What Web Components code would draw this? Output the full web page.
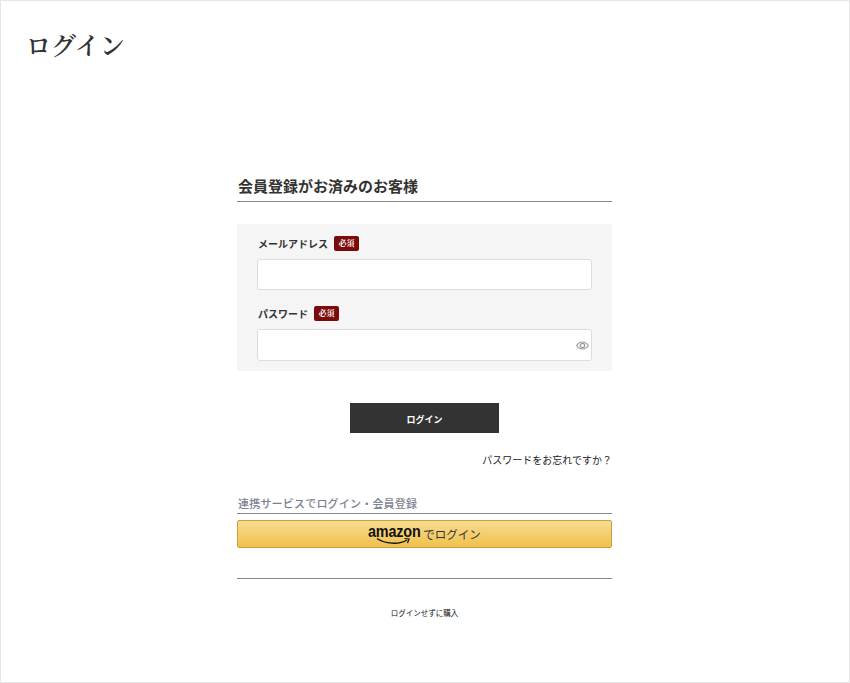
<!DOCTYPE html>
<html lang="ja">
<head>
<meta charset="utf-8">
<title>ログイン</title>
<style>
    html, body { margin: 0; padding: 0; background: #fff; }
    body { font-family: "Noto Sans CJK JP", "Noto Sans", sans-serif; color: #333; }
</style>
</head>
<body>
<login-page>
    <login-section heading="会員登録がお済みのお客様">
        <login-panel>
            <login-field label="メールアドレス"></login-field>
            <login-field label="パスワード" type="password"></login-field>
        </login-panel>
    </login-section>
</login-page>

<script>
class LoginPage extends HTMLElement {
    constructor() {
        super();
        this.attachShadow({ mode: 'open' });
        this.shadowRoot.innerHTML = `
            <style>
                :host { display: block; box-sizing: border-box; width: 850px; height: 683px; border: 1px solid #e6e6e6; overflow: hidden; }
                h1 { margin: 0; padding: 25px 0 0 25px; font: 600 25px/36px "Noto Serif CJK JP", "Noto Sans CJK JP", serif; color: #333; }
                main { width: 375px; margin: 113px 0 0 236px; }
                .submit { display: flex; justify-content: center; margin-top: 32px; }
                .forgot { margin-top: 19px; text-align: right; font-size: 10px; line-height: 16px; color: #222; }
                h2 { margin: 27px 0 0; padding: 0 0 1px 1px; border-bottom: 1px solid #888; font-size: 11px; line-height: 17px; font-weight: 500; color: #7c8290; letter-spacing: .2px; }
                hr { margin: 30px 0 0; border: 0; border-top: 1px solid #888; }
                .guest { margin-top: 28px; text-align: center; font-size: 7.5px; line-height: 12px; color: #111; }
            </style>
            <h1>ログイン</h1>
            <main>
                <slot></slot>
                <div class="submit"><dark-button>ログイン</dark-button></div>
                <div class="forgot">パスワードをお忘れですか？</div>
                <h2>連携サービスでログイン・会員登録</h2>
                <amazon-button></amazon-button>
                <hr>
                <div class="guest">ログインせずに購入</div>
            </main>
        `;
    }
}

class LoginSection extends HTMLElement {
    constructor() {
        super();
        this.attachShadow({ mode: 'open' });
        this.shadowRoot.innerHTML = `
            <style>
                :host { display: block; }
                h2 { margin: 0 0 22px; padding: 0 0 5px 1px; border-bottom: 1px solid #888; font-size: 15px; line-height: 21px; font-weight: 700; color: #333; }
            </style>
            <h2>${this.getAttribute('heading')}</h2>
            <slot></slot>
        `;
    }
}

class LoginPanel extends HTMLElement {
    constructor() {
        super();
        this.attachShadow({ mode: 'open' });
        this.shadowRoot.innerHTML = `
            <style>
                :host { display: flex; flex-direction: column; gap: 15px; padding: 11px 20px 10px; background: #f5f5f5; }
            </style>
            <slot></slot>
        `;
    }
}

class LoginField extends HTMLElement {
    constructor() {
        super();
        this.attachShadow({ mode: 'open' });
        const isPassword = this.getAttribute('type') === 'password';
        this.shadowRoot.innerHTML = `
            <style>
                :host { display: block; }
                .label { display: flex; align-items: center; gap: 6px; height: 16px; margin-bottom: 8px; padding-left: 1px; font-size: 10px; font-weight: 700; color: #333; }
                .badge { display: flex; align-items: center; justify-content: center; width: 25px; height: 15px; border-radius: 2px; background: #7d0a0a; color: #fff; font: 700 8px/1 "Noto Serif CJK JP", "Noto Sans CJK JP", serif; }
                .box { position: relative; }
                input { display: block; box-sizing: border-box; width: 100%; height: ${isPassword ? 32 : 31}px; margin: 0; padding: 0 10px; border: 1px solid #ddd; border-radius: 3px; background: #fff; outline: none; }
                svg { position: absolute; right: 3px; top: 11px; width: 13px; height: 11px; }
            </style>
            <div class="label">${this.getAttribute('label')}<span class="badge">必須</span></div>
            <div class="box">
                <input type="${isPassword ? 'password' : 'text'}">
                ${isPassword ? `<svg viewBox="0 0 13 11" fill="none" stroke="#999" stroke-width="1.200"><path d="M.7 5.500C2.200 3.200 4.200 2 6.500 2s4.300 1.200 5.800 3.500C10.800 7.800 8.800 9 6.500 9S2.200 7.800.7 5.500z"/><circle cx="6.500" cy="5.500" r="2.200"/></svg>` : ''}
            </div>
        `;
    }
}

class DarkButton extends HTMLElement {
    constructor() {
        super();
        this.attachShadow({ mode: 'open' });
        this.shadowRoot.innerHTML = `
            <style>
                :host { display: flex; align-items: center; justify-content: center; width: 149px; height: 30px; padding-top: 2px; box-sizing: border-box; background: #333; color: #fff; font-size: 9px; font-weight: 700; cursor: pointer; }
            </style>
            <slot></slot>
        `;
    }
}

class AmazonButton extends HTMLElement {
    constructor() {
        super();
        this.attachShadow({ mode: 'open' });
        this.shadowRoot.innerHTML = `
            <style>
                :host { display: flex; align-items: center; justify-content: center; box-sizing: border-box; height: 28px; margin-top: 6px; border: 1px solid #c9a043; border-radius: 2px; background: linear-gradient(#f8dc92, #f0c14b); cursor: pointer; }
                .logo { position: relative; display: block; width: 53px; height: 22px; margin-right: 2px; }
                .word { display: block; margin-top: 1px; font: 700 16px/16px "Liberation Sans", sans-serif; color: #111; transform: scaleX(.9); transform-origin: left top; letter-spacing: -.2px; }
                svg { position: absolute; left: 8px; top: 14px; width: 36px; height: 9px; }
                .text { font-size: 11.500px; line-height: 16px; color: #333; }
            </style>
            <span class="logo">
                <span class="word">amazon</span>
                <svg viewBox="0 0 36 9" fill="none"><path d="M1 1.500C9 7 23 8 31 3" stroke="#111" stroke-width="1.300"/><path d="M28.500 1.500l4.500.5-1.500 4" stroke="#111" stroke-width="1.200"/></svg>
            </span>
            <span class="text">でログイン</span>
        `;
    }
}

customElements.define('login-page', LoginPage);
customElements.define('login-section', LoginSection);
customElements.define('login-panel', LoginPanel);
customElements.define('login-field', LoginField);
customElements.define('dark-button', DarkButton);
customElements.define('amazon-button', AmazonButton);
</script>
</body>
</html>
